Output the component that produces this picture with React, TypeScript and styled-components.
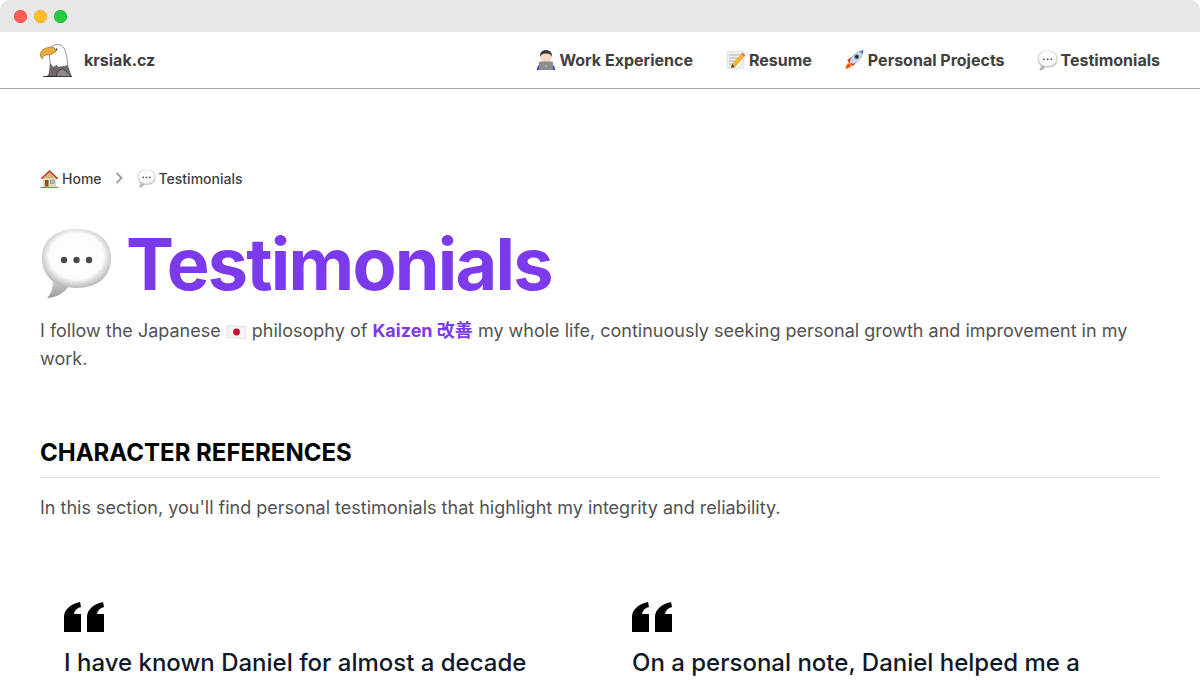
import React from 'react';
import styled, { createGlobalStyle } from 'styled-components';

const GlobalStyle = createGlobalStyle`
  html, body {
    margin: 0;
    padding: 0;
    background: #fff;
  }
  body {
    font-family: Inter, "Noto Sans CJK JP", sans-serif;
  }
`;

const Frame = styled.div`
  width: 1200px;
  height: 680px;
  overflow: hidden;
  border-radius: 10px;
  background: #fff;
`;

const TitleBar = styled.div`
  height: 32px;
  box-sizing: border-box;
  padding: 1px 14px 0;
  background: #e7e7e7;
  display: flex;
  align-items: center;
  gap: 7px;
`;

const Light = styled.span<{ $color: string; $edge: string }>`
  width: 13px;
  height: 13px;
  border-radius: 50%;
  background: ${(p) => p.$color};
  box-shadow: inset 0 0 0 0.5px ${(p) => p.$edge};
`;

const Header = styled.header`
  height: 57px;
  box-sizing: border-box;
  border-bottom: 1px solid #a8a8a8;
  padding: 0 40px;
  display: flex;
  align-items: center;
  justify-content: space-between;
`;

const Brand = styled.a`
  display: flex;
  align-items: center;
  gap: 12px;
  font-size: 16px;
  font-weight: 700;
  color: #404040;
`;

const Nav = styled.nav`
  display: flex;
  align-items: center;
  gap: 32px;
`;

const NavLink = styled.a`
  display: flex;
  align-items: center;
  gap: 3px;
  font-size: 16px;
  line-height: 24px;
  font-weight: 700;
  color: #404040;
`;

const Main = styled.main`
  padding: 79px 40px 0;
`;

const Crumbs = styled.div`
  display: flex;
  align-items: center;
  height: 20px;
  font-size: 14px;
  font-weight: 500;
  color: #404040;
`;

const Crumb = styled.a`
  display: flex;
  align-items: center;
  gap: 3px;
`;

const Chevron = styled.svg`
  margin: 0 13px 0 12px;
  display: block;
`;

const Title = styled.h1`
  margin: 36px 0 0;
  display: flex;
  align-items: center;
  gap: 14px;
  height: 80px;
  font-size: 72px;
  line-height: 80px;
  font-weight: 700;
  letter-spacing: -1.8px;
  color: #7c3aed;
`;

const Lead = styled.p`
  margin: 13px 0 0;
  font-size: 18px;
  line-height: 28px;
  color: #525252;
`;

const Flag = styled.svg`
  display: inline-block;
  vertical-align: -3px;
`;

const Strong = styled.strong`
  font-weight: 700;
  color: #7c3aed;
`;

const SectionTitle = styled.h2`
  margin: 64px 0 0;
  padding-bottom: 8px;
  border-bottom: 1px solid #e5e5e5;
  font-size: 24px;
  line-height: 32px;
  font-weight: 700;
  color: #000;
`;

const SectionText = styled.p`
  margin: 16px 0 0;
  font-size: 18px;
  line-height: 28px;
  color: #525252;
`;

const Quotes = styled.div`
  margin-top: 80px;
  display: grid;
  grid-template-columns: 1fr 1fr;
  column-gap: 16px;
`;

const Quote = styled.figure`
  margin: 0;
  padding: 0 24px;
`;

const QuoteMark = styled.svg`
  display: block;
  margin-bottom: 15px;
`;

const QuoteText = styled.blockquote`
  margin: 0;
  font-size: 24px;
  line-height: 32px;
  font-weight: 500;
  color: #111827;
`;

const EmojiSvg = styled.svg`
  display: block;
  flex: none;
`;

const Bubble = ({ size }: { size: number }) => (
  <EmojiSvg width={size} height={size} viewBox="0 0 72 72">
    <defs>
      <radialGradient id="bubbleFill" cx="50%" cy="46%" r="56%">
        <stop offset="0%" stopColor="#ffffff" />
        <stop offset="70%" stopColor="#fbfbfb" />
        <stop offset="100%" stopColor="#b0b0b0" />
      </radialGradient>
      <linearGradient id="bubbleTail" x1="0" y1="0" x2="0" y2="1">
        <stop offset="0%" stopColor="#d0d0d0" />
        <stop offset="100%" stopColor="#9a9a9a" />
      </linearGradient>
    </defs>
    <path d="M13 52 C13 61 11 66 7 70 C16 70 24 65 30 57 Z" fill="url(#bubbleTail)" />
    <path
      d="M36.5 1 C57 1 71 12 71 30 C71 49 57 60 36.5 60 C16 60 2 49 2 30 C2 12 16 1 36.5 1 Z"
      fill="url(#bubbleFill)"
    />
    <circle cx="24" cy="32" r="3.2" fill="#4a4a4a" />
    <circle cx="36.5" cy="32" r="3.2" fill="#4a4a4a" />
    <circle cx="49" cy="32" r="3.2" fill="#4a4a4a" />
  </EmojiSvg>
);

const Eagle = () => (
  <EmojiSvg width="32" height="34" viewBox="0 0 32 34">
    <path d="M3 34 H32 C30 29 29 25 27 20 L10 20 C9 25 10 31 7 33 Z" fill="#6f686d" />
    <path d="M3 33.6 H32" stroke="#111" strokeWidth="0.8" />
    <path d="M17 33.5 C16 29 20 26 23 26 C26 28 29 31 31 33.5 Z" fill="#8f898d" stroke="#2a2a2a" strokeWidth="0.6" />
    <path
      d="M9 6 C12 1.5 18 0.5 21.5 2.5 C25.5 5 26.5 12 28 22 C24 24.5 21 23 19 24.5 L16.5 22.5 L13 24.5 L10 20 C10 17 9 13 9.5 11 Z"
      fill="#fff"
      stroke="#333"
      strokeWidth="0.5"
    />
    <path
      d="M14 4.5 C7 3.5 1 6 0.5 11 C0.3 13 1 15 2.2 16 C3 13 4.5 12 7 12 C10 12 13 11 16 8.5 Z"
      fill="#e6ac3f"
      stroke="#7a5618"
      strokeWidth="0.5"
    />
    <circle cx="16.5" cy="6.5" r="0.9" fill="#222" />
  </EmojiSvg>
);

const Technologist = () => (
  <EmojiSvg width="20" height="20" viewBox="0 0 20 20">
    <path d="M1 20 C1 15 4 13 10 13 C16 13 19 15 19 20 Z" fill="#2f4db3" />
    <circle cx="10" cy="6.5" r="6" fill="#f3d6c4" />
    <path d="M4 6.5 C3.6 2 7 0 10 0 C13 0 16.4 2 16 6.5 C14.5 4 12 3.4 10 3.4 C8 3.4 5.5 4 4 6.5 Z" fill="#3a3a3a" />
    <rect x="3" y="11.5" width="14" height="8.5" rx="1" fill="#8c8c92" />
    <circle cx="10" cy="16" r="0.8" fill="#e8e8e8" />
  </EmojiSvg>
);

const Memo = () => (
  <EmojiSvg width="21" height="20" viewBox="-2 0 21 20">
    <rect x="0" y="1" width="17" height="18" rx="1" fill="#eeeeea" stroke="#d0d0cc" strokeWidth="0.5" />
    <path d="M2 5 H15 M2 8 H15 M2 11 H10 M2 14 H7" stroke="#a8a8a8" strokeWidth="0.8" />
    <path d="M4 18 L5 14 L14 4 L17 7 L8 17 Z" fill="#f2b632" />
    <path d="M14 4 L15.5 2.5 L18.5 5.5 L17 7 Z" fill="#e86a6a" />
    <path d="M4 18 L5 14 L8 17 Z" fill="#5a4a32" />
  </EmojiSvg>
);

const Rocket = () => (
  <EmojiSvg width="21" height="20" viewBox="1.5 0 19.5 20">
    <path d="M2 19 C2 15 4 13 6 12 L9 15 C8 17 6 19 2 19 Z" fill="#f5a623" />
    <path d="M3 18 C3 16 4 15 6 14 L7 15 C7 16 5 18 3 18 Z" fill="#e5352b" />
    <path d="M4 10 L8 7 L8 11 L6 13 Z" fill="#d9342b" />
    <path d="M10 16 L13 12 L9 12 L7 14 Z" fill="#d9342b" />
    <path d="M6.5 11.5 C8 6 13 1.5 20 0.5 C19.5 7 15 12 9.5 14 Z" fill="#cfd8e6" stroke="#7d8ea6" strokeWidth="0.5" />
    <path d="M16 1.2 C17.5 0.8 19 0.6 20 0.5 C19.9 1.8 19.6 3 19.2 4.2 Z" fill="#4a7ec2" />
    <circle cx="13.5" cy="6.8" r="2" fill="#222" stroke="#4a7ec2" strokeWidth="0.8" />
  </EmojiSvg>
);

const House = () => (
  <EmojiSvg width="19" height="19" viewBox="0 0 19 19">
    <rect x="3" y="8" width="13" height="9.5" fill="#e9d9b8" />
    <path d="M0.5 9.5 L9.5 1 L18.5 9.5 L16.5 10 L9.5 4 L2.5 10 Z" fill="#b5392e" />
    <path d="M9.5 3 L15.5 8.5 L15.5 9 L3.5 9 L3.5 8.5 Z" fill="#d9b37c" />
    <rect x="5" y="11" width="3.5" height="6.5" fill="#8a4a28" />
    <rect x="10.5" y="11" width="4" height="3.5" fill="#8cc4e4" stroke="#a08058" strokeWidth="0.5" />
    <path d="M0.5 18.5 H18.5" stroke="#6aa84f" strokeWidth="1.6" />
  </EmojiSvg>
);

const QuoteIcon = () => (
  <QuoteMark width="40" height="30" viewBox="0 0 40 30">
    <path d="M0 30 V15 C0 8 6 2 16 0 L17 5 C13 6 10.5 8.5 10 12 H17 V30 Z" fill="#000" />
    <path d="M23 30 V15 C23 8 29 2 39 0 L40 5 C36 6 33.5 8.5 33 12 H40 V30 Z" fill="#000" />
  </QuoteMark>
);

const navItems = [
  { icon: <Technologist />, label: 'Work Experience' },
  { icon: <Memo />, label: 'Resume' },
  { icon: <Rocket />, label: 'Personal Projects' },
  { icon: <Bubble size={21} />, label: 'Testimonials' },
];

export default function App() {
  return (
    <Frame>
      <GlobalStyle />
      <TitleBar>
        <Light $color="#ff5f57" $edge="#e5493f" />
        <Light $color="#febc2e" $edge="#e0a020" />
        <Light $color="#28c840" $edge="#1fae35" />
      </TitleBar>
      <Header>
        <Brand>
          <Eagle />
          krsiak.cz
        </Brand>
        <Nav>
          {navItems.map((item) => (
            <NavLink key={item.label}>
              {item.icon}
              {item.label}
            </NavLink>
          ))}
        </Nav>
      </Header>
      <Main>
        <Crumbs>
          <Crumb>
            <House />
            Home
          </Crumb>
          <Chevron width="10" height="14" viewBox="0 0 10 14">
            <path d="M2.5 2 L7.5 7 L2.5 12" fill="none" stroke="#a3a3a3" strokeWidth="2" />
          </Chevron>
          <Crumb>
            <Bubble size={19} />
            Testimonials
          </Crumb>
        </Crumbs>
        <Title>
          <Bubble size={72} />
          Testimonials
        </Title>
        <Lead>
          I follow the Japanese{' '}
          <Flag width="21" height="16" viewBox="0 0 21 16">
            <path d="M1 2 C7 0 14 4 20 2 V14 C14 16 7 12 1 14 Z" fill="#f4f4f4" stroke="#cfcfcf" strokeWidth="0.5" />
            <circle cx="10.5" cy="8" r="3.4" fill="#c8102e" />
          </Flag>{' '}
          philosophy of <Strong>Kaizen 改善</Strong> my whole life, continuously seeking personal growth and
          improvement in my work.
        </Lead>
        <SectionTitle>CHARACTER REFERENCES</SectionTitle>
        <SectionText>In this section, you'll find personal testimonials that highlight my integrity and reliability.</SectionText>
        <Quotes>
          <Quote>
            <QuoteIcon />
            <QuoteText>I have known Daniel for almost a decade</QuoteText>
          </Quote>
          <Quote>
            <QuoteIcon />
            <QuoteText>On a personal note, Daniel helped me a</QuoteText>
          </Quote>
        </Quotes>
      </Main>
    </Frame>
  );
}
